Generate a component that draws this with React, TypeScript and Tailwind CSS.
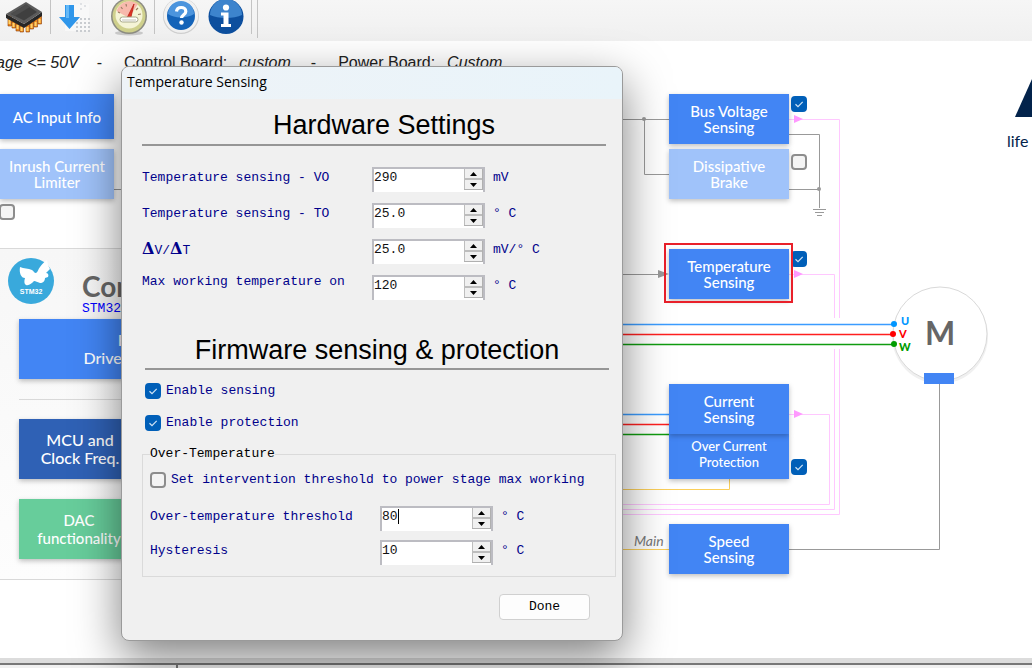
import { useState } from 'react';
import type { ReactNode } from 'react';

interface ToolButtonProps {
  label: string;
  className?: string;
  children: ReactNode;
}

function ToolButton({ label, className = 'w-[49px]', children }: ToolButtonProps) {
  return (
    <button type="button" aria-label={label} className={`flex h-10 items-center justify-center ${className}`}>
      {children}
    </button>
  );
}

function ToolSeparator() {
  return <div className="mx-px h-[34px] w-px self-start bg-[#c4c4c4]" />;
}

function ChipIcon() {
  return (
    <svg width="40" height="40" viewBox="4 0 40 40">
      <g fill="#f08a1e" stroke="#8a3d08" strokeWidth="0.6">
        <path d="M7 16h3.500v10H7zM11 19h3.500v9H11zM15 22h3.500v9H15zM19 24h3.500v8H19z" />
        <path d="M37 16h3.500v8H37zM33 18h3.500v9H33zM29 20h3.500v9H29zM25 23h3.500v9H25z" />
      </g>
      <g fill="#ffd36a">
        <path d="M7.500 20h2v4h-2zM11.500 23h2v4h-2zM15.500 25h2v4h-2zM19.500 27h2v4h-2zM25.500 27h2v4h-2zM29.500 24h2v4h-2zM33.500 22h2v4h-2zM37.500 19h2v4h-2z" />
      </g>
      <path d="M5 14 23 24v4L5 18zM41 12 23 24v4l18-12z" fill="#262626" />
      <path d="M5 14 25 2l16 10-18 12z" fill="#5b5b5b" />
      <path d="M10 14 25 4.500 36 12 23 20.500z" fill="#3f3f3f" />
      <path d="M10 14 25 4.500 29 7 14 16z" fill="#4d4d4d" />
    </svg>
  );
}

function DownloadIcon() {
  const dots = [0, 1, 2, 3];
  return (
    <svg width="40" height="40" viewBox="0 0 40 40">
      <path d="M8 4h24v27H8z" fill="#f8f8f8" />
      {dots.map((row) =>
        dots.map((col) => (
          <rect key={`${row}-${col}`} x={19 + col * 4} y={18 + row * 4} width="2" height="2" fill="#c9ccd0" />
        ))
      )}
      <path d="M23 3h2v2h-2zM27 5h2v2h-2zM23 8h2v2h-2z" fill="#dfe1e4" />
      <path d="M8 5h9v12h6L12.500 29 2 17h6z" fill="#2f96ea" />
      <path d="M9 5h3v13H9z" fill="#65b9f7" />
    </svg>
  );
}

function GaugeIcon() {
  return (
    <svg width="40" height="40" viewBox="0 0 40 40">
      <ellipse cx="20" cy="33" rx="14" ry="2.500" fill="#c9c9c9" />
      <circle cx="20" cy="16" r="18" fill="#8c8c82" />
      <circle cx="20" cy="16" r="16.500" fill="#cfd08c" />
      <circle cx="20" cy="15" r="13.500" fill="#f5f4d6" />
      <path d="M20 18 7.500 11A14 14 0 0 1 29 4z" fill="#f7b9ac" />
      <path d="M9 12l2 1M12 7l1.500 2M17 4l.5 2.500M29 8l-2 2M32 14l-3 .5" stroke="#9b7d63" strokeWidth="1.200" />
      <path d="M18.500 17 25 4l-3 13z" fill="#e03525" stroke="#b92117" strokeWidth="0.800" />
      <rect x="11" y="17" width="18" height="5" rx="2.500" fill="#fff" stroke="#a9a98a" />
      <path d="M13 20h14" stroke="#c4c4b4" />
    </svg>
  );
}

function HelpIcon() {
  return (
    <svg width="40" height="40" viewBox="0 0 40 40">
      <circle cx="21" cy="16" r="18" fill="#cfcfcf" />
      <circle cx="21" cy="15.500" r="17.200" fill="#f1f1f1" />
      <circle cx="21" cy="16" r="14" fill="#1463b8" />
      <path d="M8 14a13 13 0 0 1 26 0c-6 4-19 5-26 0z" fill="#4b94dd" />
      <path
        d="M16.500 11.500c.3-2.600 2.200-4 4.700-4s4.600 1.500 4.600 3.900c0 3.200-4.300 3.300-4.300 6.700"
        fill="none"
        stroke="#fff"
        strokeWidth="3.200"
      />
      <circle cx="21.500" cy="22.500" r="2.200" fill="#fff" />
    </svg>
  );
}

function InfoIcon() {
  return (
    <svg width="40" height="40" viewBox="0 0 40 40">
      <circle cx="19" cy="16.500" r="17.500" fill="#0d4f9e" />
      <path d="M3 15a16 16 0 0 1 32 0c-8 4-24 4-32 0z" fill="#3d84cd" />
      <circle cx="19" cy="7.500" r="3.100" fill="#fff" />
      <path d="M14 12.500h7.500V24H24v3H14v-3h2.500v-8.500H14z" fill="#fff" />
    </svg>
  );
}

function Toolbar() {
  return (
    <header className="flex h-[41px] shrink-0 bg-gradient-to-b from-[#f6f6f6] to-[#f0f0f0]">
      <ToolButton label="Board"><ChipIcon /></ToolButton>
      <ToolSeparator />
      <ToolButton label="Generate"><DownloadIcon /></ToolButton>
      <ToolSeparator />
      <ToolButton label="Performance"><GaugeIcon /></ToolButton>
      <ToolSeparator />
      <ToolButton label="Help" className="w-[47px]"><HelpIcon /></ToolButton>
      <ToolButton label="About" className="w-[47px]"><InfoIcon /></ToolButton>
      <ToolSeparator />
      <div className="ml-1 h-[38px] w-px bg-[#c4c4c4]" />
    </header>
  );
}

interface BlockProps {
  className: string;
  children: ReactNode;
}

function Block({ className, children }: BlockProps) {
  return (
    <button
      type="button"
      className={`absolute flex flex-col items-center justify-center font-['Century_Gothic',Lato,sans-serif] leading-4 font-medium text-white shadow-[0_2px_5px_rgba(0,0,0,0.25)] ${className}`}
    >
      {children}
    </button>
  );
}

interface CheckProps {
  id?: string;
  label?: string;
  defaultChecked?: boolean;
  className?: string;
}

function Check({ id, label, defaultChecked = false, className = 'relative' }: CheckProps) {
  return (
    <span className={`flex size-4 shrink-0 ${className}`}>
      <input
        id={id}
        type="checkbox"
        aria-label={label}
        defaultChecked={defaultChecked}
        className="peer size-4 appearance-none rounded border-2 border-[#8d8d8d] bg-[#f4f4f4] checked:border-[#005fb8] checked:bg-[#005fb8]"
      />
      <svg viewBox="0 0 16 16" className="pointer-events-none absolute size-4 opacity-0 peer-checked:opacity-100">
        <path d="M4.500 8.300 7 10.700l4.700-4.900" fill="none" stroke="#cfe3f5" strokeWidth="1.200" />
      </svg>
    </span>
  );
}

function Wires() {
  return (
    <svg width="1032" height="620" viewBox="0 41 1032 620" fill="none" className="absolute top-0 left-0">
      <g stroke="#999">
        <path d="M114 189.500h10M622 119.500h47M644.500 119v55.500H669M622 274.500h38" />
        <path d="M789 134.500h30.500V208M789 189.500h30M789 549.500h150.500V383" />
        <path d="M813 209.500h13M815 212.500h9M817 215.500h5" />
      </g>
      <g fill="#999">
        <circle cx="644" cy="119" r="2" />
        <circle cx="819" cy="189" r="2" />
        <path d="M658 270v8l11-4z" />
      </g>

      <g stroke="#ffc8ff">
        <path d="M789 119.500h50.500V318M839.500 349v165.500H622" />
        <path d="M789 274.500h45.500V318M834.500 349v160.500H622" />
        <path d="M789 414.500h40.500v90H622" />
      </g>
      <path d="M794 115v8l9-4zM794 270v8l9-4zM794 410v8l9-4z" fill="#ff99ff" />
      <path d="M622 489.500h107.500V479M622 549.500h47" stroke="#fbcf5a" />

      <circle cx="940" cy="336" r="48" fill="#f0f0f0" />
      <circle cx="940" cy="334" r="47" fill="#fff" stroke="#d9d9d9" />
      <path d="M924 373h30v11h-30z" fill="#4285f4" />

      <path d="M622 324.500h272M622 414.500h47" stroke="#3b9cff" strokeWidth="1.500" />
      <path d="M622 334.500h272M622 424.500h47" stroke="#ff1f1f" strokeWidth="1.500" />
      <path d="M622 344.500h272M622 434.500h47" stroke="#109c10" strokeWidth="1.500" />
      <circle cx="894" cy="324" r="3" fill="#0096ff" />
      <circle cx="893" cy="334" r="3" fill="#ff0000" />
      <circle cx="894" cy="344" r="3" fill="#009c00" />

      <path d="M1015 117 1036 70v47z" fill="#03234b" />
    </svg>
  );
}

function Stm32Logo() {
  return (
    <svg width="46" height="46" viewBox="0 0 46 46" className="absolute top-[217px] left-2">
      <circle cx="23" cy="23" r="23" fill="#39a9dc" />
      <path
        d="M12 9c4 2 8 1 12 3 2 1 2 3 4 3 2-1 2-4 4-6 2-3 4-5 7-7l1 5 2 4-4 4c2 0 3 2 2 4l-3 1c0 3-2 5-5 5-3-1-4-2-6-2-2 2-5 5-8 4-2-1-2-4-1-7-4 0-6-5-5-11z"
        fill="#fff"
      />
      <text x="23" y="36" textAnchor="middle" className="fill-white font-['Liberation_Sans',sans-serif] text-[7px] font-bold">
        STM32
      </text>
    </svg>
  );
}

function Diagram() {
  return (
    <main className="relative flex-1 overflow-hidden bg-white">
      <div className="flex pt-3 text-base leading-5 whitespace-pre text-[#222]">
        <i className="-ml-1">age &lt;= 50V</i>
        <span className="ml-[18px]">-</span>
        <span className="ml-[22px]">Control Board:</span>
        <i className="ml-3">custom</i>
        <span className="ml-5">-</span>
        <span className="ml-[22px]">Power Board:</span>
        <i className="ml-3">Custom</i>
      </div>

      <section className="absolute top-[207px] left-0 h-[332px] w-[400px] border-y border-[#d9d9d9] bg-gradient-to-b from-[#f7f7f7] to-[#fdfdfd]" />
      <Wires />

      <Block className="top-[53px] left-0 h-[45px] w-[114px] bg-[#4285f4] text-[15px]">AC Input Info</Block>
      <Block className="top-[108px] left-0 h-[50px] w-[114px] bg-[#a0c3fa] text-[15px]">
        <span>Inrush Current</span>
        <span>Limiter</span>
      </Block>
      <Check label="Inrush Current Limiter" className="absolute top-[163px] -left-px" />

      <Stm32Logo />
      <h2 className="absolute top-[227px] left-[82px] font-['Century_Gothic',Lato,sans-serif] text-[28px] leading-9 font-bold text-[#666]">
        Con
      </h2>
      <span className="absolute top-[260px] left-[82px] font-['Liberation_Mono',monospace] text-[13px] leading-4 text-[#0000ff]">
        STM32F
      </span>
      <Block className="top-[278px] left-[19px] h-[60px] w-[264px] bg-[#4285f4] text-base">
        <span className="leading-[18px]">Firmware</span>
        <span className="leading-[18px]">Drive Management</span>
      </Block>
      <hr className="absolute top-[358px] left-[19px] w-[264px] border-[#d9d9d9]" />
      <Block className="top-[378px] left-[19px] h-[60px] w-[122px] bg-[#2f61b5] text-base">
        <span className="leading-[18px]">MCU and</span>
        <span className="leading-[18px]">Clock Freq.</span>
      </Block>
      <Block className="top-[458px] left-[19px] h-[60px] w-[120px] bg-[#67cd9b] text-[15px]">
        <span className="leading-[18px]">DAC</span>
        <span className="leading-[18px]">functionality</span>
      </Block>

      <Block className="top-[53px] left-[669px] h-[50px] w-[120px] bg-[#4285f4] text-[15px]">
        <span>Bus Voltage</span>
        <span>Sensing</span>
      </Block>
      <Check label="Bus Voltage Sensing" defaultChecked className="absolute top-[55px] left-[791px]" />
      <Block className="top-[108px] left-[669px] h-[50px] w-[120px] bg-[#a0c3fa] text-[15px]">
        <span>Dissipative</span>
        <span>Brake</span>
      </Block>
      <Check label="Dissipative Brake" className="absolute top-[113px] left-[791px]" />
      <Check label="Temperature Sensing" defaultChecked className="absolute top-[210px] left-[791px]" />
      <Block className="top-[208px] left-[669px] h-[50px] w-[120px] bg-[#4285f4] text-[15px]">
        <span>Temperature</span>
        <span>Sensing</span>
      </Block>
      <div className="pointer-events-none absolute top-[202px] left-[664px] h-[60px] w-[129px] border-2 border-[#e9202a]" />
      <Block className="top-[393px] left-[669px] h-[45px] w-[120px] bg-[#4285f4] pb-[6px] text-[13px]">
        <span>Over Current</span>
        <span>Protection</span>
      </Block>
      <Block className="top-[343px] left-[669px] h-[50px] w-[120px] bg-[#4285f4] text-[15px]">
        <span>Current</span>
        <span>Sensing</span>
      </Block>
      <Check label="Over Current Protection" defaultChecked className="absolute top-[418px] left-[791px]" />
      <Block className="top-[483px] left-[669px] h-[50px] w-[120px] bg-[#4285f4] text-[15px]">
        <span>Speed</span>
        <span>Sensing</span>
      </Block>

      <div className="font-['Century_Gothic',Lato,sans-serif]">
        <i className="absolute top-[492px] left-[634px] text-sm leading-4 text-[#777]">Main</i>
        <b className="absolute top-[274px] left-[901px] text-[11px] leading-3 font-black text-[#0096ff]">U</b>
        <b className="absolute top-[287px] left-[899px] text-[11px] leading-3 font-black text-[#ff0000]">V</b>
        <b className="absolute top-[300px] left-[899px] text-[11px] leading-3 font-black text-[#009c00]">W</b>
        <b className="absolute top-[274px] left-[925px] text-[32px] leading-9 font-bold text-[#666]">M</b>
        <span className="absolute top-[92px] left-[1007px] text-base leading-4 text-[#03234b]">life</span>
      </div>
    </main>
  );
}

interface SpinFieldProps {
  id: string;
  label: ReactNode;
  initial: string;
  unit: string;
  labelClass?: string;
  showCaret?: boolean;
}

function SpinField({ id, label, initial, unit, labelClass = 'leading-[22px]', showCaret = false }: SpinFieldProps) {
  const [value, setValue] = useState(initial);
  const decimals = initial.includes('.') ? 1 : 0;

  const step = (delta: number) => {
    setValue((Number(value) + delta).toFixed(decimals));
  };

  return (
    <div className="flex items-start">
      <label htmlFor={id} className={`w-[230px] shrink-0 whitespace-nowrap ${labelClass}`}>
        {label}
      </label>
      <div className="relative flex h-[25px] w-[113px] shrink-0 border-x-2 border-t-2 border-[#bcbcc2] bg-white text-[#111]">
        <input
          id={id}
          value={value}
          onChange={(e) => setValue(e.target.value)}
          className="h-[18px] w-0 flex-1 leading-[18px] outline-none"
        />
        {showCaret && <span className="absolute top-px left-4 h-[15px] w-px bg-black" />}
        <div className="flex h-[21px] w-[19px] flex-col border-r border-b border-[#b0b0b0] bg-[#f0f0f0]">
          <button
            type="button"
            aria-label={`Increase ${id}`}
            onClick={() => step(1)}
            className="flex flex-1 items-center justify-center border-b-2 border-l border-[#bdbdbd]"
          >
            <svg width="7" height="4" viewBox="0 0 7 4"><path d="M0 4 3.500 0 7 4z" /></svg>
          </button>
          <button
            type="button"
            aria-label={`Decrease ${id}`}
            onClick={() => step(-1)}
            className="flex flex-1 items-center justify-center border-l border-[#bdbdbd]"
          >
            <svg width="7" height="4" viewBox="0 0 7 4"><path d="M0 0 3.500 4 7 0z" /></svg>
          </button>
        </div>
      </div>
      <span className="ml-2 leading-[22px] whitespace-nowrap">{unit}</span>
    </div>
  );
}

function Delta() {
  return <span className="font-['DejaVu_Serif',serif] text-base leading-5 font-bold">Δ</span>;
}

function TemperatureDialog() {
  return (
    <div
      role="dialog"
      aria-labelledby="dialog-title"
      className="absolute top-[66px] left-[121px] w-[502px] overflow-hidden rounded-lg border border-[#9a9a9a] bg-[#f0f0f0] shadow-[0_16px_46px_rgba(0,0,0,0.5)]"
    >
      <h1
        id="dialog-title"
        className="h-8 bg-gradient-to-r from-[#eef3f7] to-[#e9f4fa] pl-[5px] font-['Segoe_UI','Open_Sans',sans-serif] text-sm leading-[30px] text-black"
      >
        Temperature Sensing
      </h1>
      <form
        onSubmit={(e) => e.preventDefault()}
        className="px-5 pt-[10px] pb-5 font-['Liberation_Mono',monospace] text-[13px] text-[#00008b]"
      >
        <h2 className="mr-[-4px] border-b-2 border-[#969696] pb-[3px] pl-5 text-center font-['Liberation_Sans',sans-serif] text-[27px] leading-8 text-black">
          Hardware Settings
        </h2>
        <div className="mt-[21px] flex flex-col gap-[11px]">
          <SpinField id="v0" label="Temperature sensing - VO" initial="290" unit="mV" />
          <SpinField id="t0" label="Temperature sensing - TO" initial="25.0" unit="° C" />
          <SpinField id="slope" label={<><Delta />V/<Delta />T</>} initial="25.0" unit="mV/° C" />
          <SpinField id="max" label="Max working temperature on" initial="120" unit="° C" labelClass="leading-[14px]" />
        </div>

        <h2 className="mt-[34px] mr-[-7px] ml-[3px] border-b-2 border-[#969696] pb-[2px] text-center font-['Liberation_Sans',sans-serif] text-[27px] leading-8 text-black">
          Firmware sensing &amp; protection
        </h2>
        <div className="mt-[11px] flex flex-col gap-3 pl-[3px] leading-5">
          <div className="flex items-center gap-[5px]">
            <Check id="enable-sensing" defaultChecked />
            <label htmlFor="enable-sensing">Enable sensing</label>
          </div>
          <div className="flex items-center gap-[5px]">
            <Check id="enable-protection" defaultChecked />
            <label htmlFor="enable-protection">Enable protection</label>
          </div>
        </div>

        <fieldset className="mt-[11px] mr-[-14px] border border-[#dadada] px-[7px] pb-[11px]">
          <legend className="leading-5 text-black">Over-Temperature</legend>
          <div className="mt-[6px] mb-4 flex items-center gap-[5px] leading-5">
            <Check id="use-max" />
            <label htmlFor="use-max">Set intervention threshold to power stage max working</label>
          </div>
          <div className="flex flex-col gap-[9px]">
            <SpinField id="threshold" label="Over-temperature threshold" initial="80" unit="° C" showCaret />
            <SpinField id="hysteresis" label="Hysteresis" initial="10" unit="° C" />
          </div>
        </fieldset>

        <div className="mt-[17px] flex justify-end pr-3">
          <button type="submit" className="h-[26px] w-[91px] rounded border border-[#d0d0d0] bg-[#fdfdfd] text-black">
            Done
          </button>
        </div>
      </form>
    </div>
  );
}

export default function App() {
  return (
    <div className="relative flex min-h-screen flex-col overflow-hidden bg-white font-['Liberation_Sans',Arial,sans-serif]">
      <Toolbar />
      <Diagram />
      <footer className="shrink-0 border-t-[5px] border-[#dcdcdc] bg-[#f0f0f0]">
        <div className="flex h-[5px] border-t-2 border-[#777]">
          <div className="w-[178px] border-r-2 border-[#777]" />
          <div className="flex-1" />
        </div>
      </footer>
      <TemperatureDialog />
    </div>
  );
}
